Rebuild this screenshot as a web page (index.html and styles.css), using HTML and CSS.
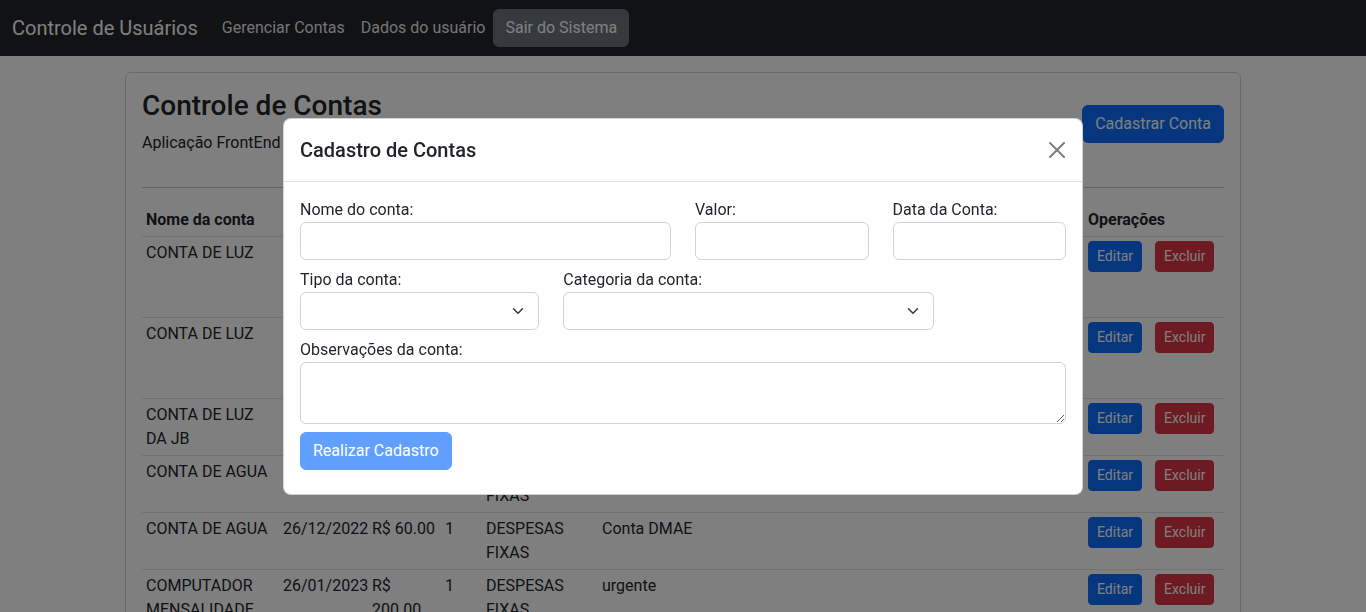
FILE: index.html
```html
<!DOCTYPE html>
<html lang="pt-BR">
<head>
<meta charset="utf-8">
<title>Controle de Usuários</title>
<link rel="stylesheet" href="styles.css">
</head>
<body>
<nav class="navbar">
  <a class="brand" href="#">Controle de Usuários</a>
  <ul class="nav">
    <li><a class="nav-link" href="#">Gerenciar Contas</a></li>
    <li><a class="nav-link" href="#">Dados do usuário</a></li>
    <li><button class="btn btn-secondary" type="button">Sair do Sistema</button></li>
  </ul>
</nav>

<main class="container">
  <section class="card">
    <div class="card-head">
      <div>
        <h3 class="title">Controle de Contas</h3>
        <p class="subtitle">Aplicação FrontEnd Angular para controle de contas</p>
      </div>
      <button class="btn btn-primary btn-head" type="button">Cadastrar Conta</button>
    </div>
    <hr class="divider">
    <table class="table">
      <colgroup>
        <col class="c-nome"><col class="c-data"><col class="c-valor"><col class="c-tipo"><col class="c-cat"><col class="c-obs"><col class="c-ops">
      </colgroup>
      <thead>
        <tr><th>Nome da conta</th><th>Data</th><th>Valor</th><th>Tipo</th><th>Categoria</th><th>Observações</th><th>Operações</th></tr>
      </thead>
      <tbody>
        <tr>
          <td>CONTA DE LUZ</td><td>20/12/2022</td><td>R$ 95.00</td><td>1</td><td>DESPESAS FIXAS DA CASA</td><td>Conta CEMIG</td>
          <td><div class="ops"><button class="btn btn-primary btn-sm" type="button">Editar</button><button class="btn btn-danger btn-sm" type="button">Excluir</button></div></td>
        </tr>
        <tr>
          <td>CONTA DE LUZ</td><td>20/01/2023</td><td>R$ 98.00</td><td>1</td><td>DESPESAS FIXAS DA CASA</td><td>Conta CEMIG</td>
          <td><div class="ops"><button class="btn btn-primary btn-sm" type="button">Editar</button><button class="btn btn-danger btn-sm" type="button">Excluir</button></div></td>
        </tr>
        <tr>
          <td>CONTA DE LUZ DA JB</td><td>22/12/2022</td><td>R$ 80.00</td><td>1</td><td>DESPESAS FIXAS</td><td>Conta CEMIG</td>
          <td><div class="ops"><button class="btn btn-primary btn-sm" type="button">Editar</button><button class="btn btn-danger btn-sm" type="button">Excluir</button></div></td>
        </tr>
        <tr>
          <td>CONTA DE AGUA</td><td>26/11/2022</td><td>R$ 55.00</td><td>1</td><td>DESPESAS FIXAS</td><td>Conta DMAE</td>
          <td><div class="ops"><button class="btn btn-primary btn-sm" type="button">Editar</button><button class="btn btn-danger btn-sm" type="button">Excluir</button></div></td>
        </tr>
        <tr>
          <td>CONTA DE AGUA</td><td>26/12/2022</td><td>R$ 60.00</td><td>1</td><td>DESPESAS FIXAS</td><td>Conta DMAE</td>
          <td><div class="ops"><button class="btn btn-primary btn-sm" type="button">Editar</button><button class="btn btn-danger btn-sm" type="button">Excluir</button></div></td>
        </tr>
        <tr>
          <td>COMPUTADOR MENSALIDADE</td><td>26/01/2023</td><td>R$ 200.00</td><td>1</td><td>DESPESAS FIXAS</td><td>urgente</td>
          <td><div class="ops"><button class="btn btn-primary btn-sm" type="button">Editar</button><button class="btn btn-danger btn-sm" type="button">Excluir</button></div></td>
        </tr>
      </tbody>
    </table>
  </section>
</main>

<div class="backdrop"></div>

<div class="modal-wrap">
  <div class="modal" role="dialog" aria-labelledby="modal-title">
    <div class="modal-header">
      <h5 class="modal-title" id="modal-title">Cadastro de Contas</h5>
      <button class="btn-close" type="button" aria-label="Fechar">
        <svg viewBox="0 0 16 16" width="16" height="16" aria-hidden="true"><path d="M.293.293a1 1 0 0 1 1.414 0L8 6.586 14.293.293a1 1 0 1 1 1.414 1.414L9.414 8l6.293 6.293a1 1 0 0 1-1.414 1.414L8 9.414l-6.293 6.293a1 1 0 0 1-1.414-1.414L6.586 8 .293 1.707a1 1 0 0 1 0-1.414z"/></svg>
      </button>
    </div>
    <div class="modal-body">
      <form>
        <div class="row">
          <div class="col col-6">
            <label for="nome">Nome do conta:</label>
            <input class="form-control" id="nome" type="text">
          </div>
          <div class="col col-3">
            <label for="valor">Valor:</label>
            <input class="form-control" id="valor" type="text">
          </div>
          <div class="col col-3">
            <label for="data">Data da Conta:</label>
            <input class="form-control" id="data" type="text">
          </div>
        </div>
        <div class="row">
          <div class="col col-4">
            <label for="tipo">Tipo da conta:</label>
            <div class="select-wrap">
              <select class="form-control form-select" id="tipo"><option></option></select>
              <svg class="chevron" viewBox="0 0 16 16" aria-hidden="true"><path d="m2 5 6 6 6-6"/></svg>
            </div>
          </div>
          <div class="col col-6">
            <label for="categoria">Categoria da conta:</label>
            <div class="select-wrap">
              <select class="form-control form-select" id="categoria"><option></option></select>
              <svg class="chevron" viewBox="0 0 16 16" aria-hidden="true"><path d="m2 5 6 6 6-6"/></svg>
            </div>
          </div>
        </div>
        <div class="row">
          <div class="col col-12">
            <label for="obs">Observações da conta:</label>
            <textarea class="form-control textarea" id="obs" rows="2"></textarea>
          </div>
        </div>
        <div class="submit-row">
          <button class="btn btn-primary" type="submit" disabled>Realizar Cadastro</button>
        </div>
      </form>
    </div>
  </div>
</div>
</body>
</html>
```

FILE: styles.css
```css
*, *::before, *::after { box-sizing: border-box; }

html, body { margin: 0; }

body {
  font-family: Roboto, "Liberation Sans", Arial, sans-serif;
  font-size: 16px;
  line-height: 1.5;
  color: #212529;
  background: #fff;
  overflow: hidden;
}

/* Navbar */
.navbar {
  display: flex;
  align-items: center;
  padding: 8px 12px;
  background: #212529;
}
.brand {
  font-size: 20px;
  line-height: 30px;
  padding: 5px 0;
  margin-right: 16px;
  color: #fff;
  text-decoration: none;
}
.nav {
  display: flex;
  align-items: center;
  list-style: none;
  margin: 0;
  padding: 0;
}
.nav-link {
  display: block;
  padding: 8px;
  color: rgba(255, 255, 255, .92);
  text-decoration: none;
}

/* Buttons */
.btn {
  display: inline-block;
  font-family: inherit;
  font-size: 16px;
  line-height: 1.5;
  padding: 6px 12px;
  border: 1px solid transparent;
  border-radius: 6px;
  cursor: pointer;
  color: #fff;
}
.btn-secondary { background: #6c757d; border-color: #6c757d; padding: 6px 11px; }
.btn-primary { background: #0d6efd; border-color: #0d6efd; }
.btn-danger { background: #dc3545; border-color: #dc3545; }
.btn-sm {
  font-size: 14px;
  padding: 4px 8px;
  border-radius: 4px;
}
.btn:disabled { opacity: .65; cursor: default; }

/* Page */
.container {
  width: 1140px;
  margin: 0 auto;
  padding: 0 12px;
}
.card {
  margin-top: 16px;
  border: 1px solid rgba(0, 0, 0, .175);
  border-radius: 6px;
  padding: 16px;
}
.card-head {
  display: flex;
  align-items: center;
  justify-content: space-between;
  padding-bottom: 16px;
}
.btn-head { margin-top: 4px; }
.title {
  margin: 0 0 8px;
  font-size: 28px;
  line-height: 1.2;
  font-weight: 500;
}
.subtitle { margin: 0; }
.divider {
  margin: 16px 0;
  border: 0;
  border-top: 1px solid #c8c9ca;
}

/* Table */
.table {
  width: 100%;
  border-collapse: collapse;
  table-layout: fixed;
}
.c-nome { width: 137px; }
.c-data { width: 89px; }
.c-valor { width: 73px; }
.c-tipo { width: 41px; }
.c-cat { width: 116px; }
.c-obs { width: 486px; }
.c-ops { width: 140px; }
.table th,
.table td {
  padding: 4px;
  text-align: left;
  vertical-align: top;
  border-bottom: 1px solid #dee2e6;
}
.table th { font-weight: 700; }
.ops {
  display: flex;
  gap: 13px;
}

/* Modal */
.backdrop {
  position: fixed;
  inset: 0;
  background: rgba(0, 0, 0, .5);
}
.modal-wrap {
  position: fixed;
  inset: 0;
  display: flex;
  align-items: center;
  justify-content: center;
}
.modal {
  width: 800px;
  background: #fff;
  border: 1px solid rgba(0, 0, 0, .175);
  border-radius: 8px;
}
.modal-header {
  display: flex;
  align-items: center;
  padding: 16px;
  border-bottom: 1px solid #dee2e6;
}
.modal-title {
  margin: 0;
  font-size: 20px;
  line-height: 1.5;
  font-weight: 500;
}
.btn-close {
  margin-left: auto;
  margin-right: 1px;
  width: 16px;
  height: 16px;
  padding: 0;
  border: 0;
  background: transparent;
  opacity: .5;
  cursor: pointer;
}
.btn-close svg { display: block; fill: #000; }
.modal-body { padding: 16px; }

/* Form */
.row {
  display: flex;
  flex-wrap: wrap;
  margin: 0 -12px 8px;
}
.col { padding: 0 12px; flex: 0 0 auto; }
.col-3 { width: 25%; }
.col-4 { width: 33.333333%; }
.col-6 { width: 50%; }
.col-12 { width: 100%; }
label { display: block; }
.form-control {
  display: block;
  width: 100%;
  height: 38px;
  padding: 6px 12px;
  font-family: inherit;
  font-size: 16px;
  line-height: 1.5;
  color: #212529;
  background: #fff;
  border: 1px solid #ced4da;
  border-radius: 6px;
  appearance: none;
}
.textarea {
  height: 62px;
  resize: vertical;
}
.select-wrap { position: relative; }
.form-select { padding-right: 36px; }
.chevron {
  position: absolute;
  right: 13px;
  top: 50%;
  width: 16px;
  height: 12px;
  transform: translateY(-50%);
  fill: none;
  stroke: #343a40;
  stroke-width: 2;
  stroke-linecap: round;
  stroke-linejoin: round;
  pointer-events: none;
}
.submit-row { margin-bottom: 8px; }
```
